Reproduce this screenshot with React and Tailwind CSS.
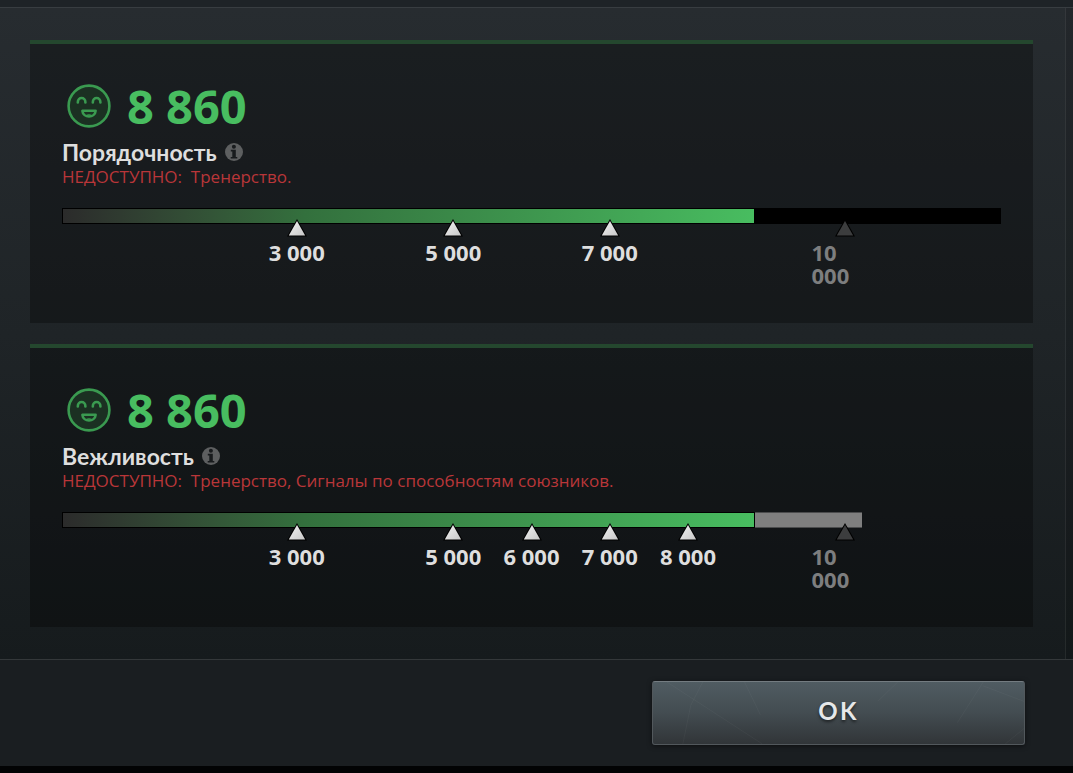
const SCALE_MAX = 12000;

const SCORES = [
  {
    id: "behavior",
    title: "Порядочность",
    value: 8860,
    locked: "Тренерство.",
    ticks: [3000, 5000, 7000, 10000],
    limit: null,
  },
  {
    id: "communication",
    title: "Вежливость",
    value: 8860,
    locked: "Тренерство, Сигналы по способностям союзников.",
    ticks: [3000, 5000, 6000, 7000, 8000, 10000],
    limit: 10220,
  },
];

const percent = (n) => `${(n / SCALE_MAX) * 100}%`;

const formatNumber = (n) => String(n).replace(/\B(?=(\d{3})+$)/g, " ");

const SmileIcon = () => (
  <svg
    viewBox="0 0 44 44"
    className="size-11 shrink-0"
    fill="none"
    stroke="#3a9a50"
    strokeWidth="2.6"
    strokeLinecap="round"
    strokeLinejoin="round"
    aria-hidden="true"
  >
    <circle cx="22" cy="22" r="20.4" fill="#1b3022" />
    <path d="M10.8 18.4c0-5.8 7.6-5.8 7.6 0" />
    <path d="M25.8 18.4c0-5.8 7.6-5.8 7.6 0" />
    <path d="M15.4 26.8h13.2c-.6 7.6-12.6 7.6-13.2 0z" />
    <path d="M19 31.8c1.8-1 4.2-1 6 0" strokeWidth="1.2" />
  </svg>
);

const InfoIcon = () => (
  <svg viewBox="0 0 18 18" className="size-[18px] block" aria-hidden="true">
    <circle cx="9" cy="9" r="9" fill="#5d5f60" />
    <circle cx="8.9" cy="3.7" r="2" fill="#181b1d" />
    <path d="M5.8 6.8h5v7.1h1.5v1.6H5.7v-1.6h1.6V8.4H5.8z" fill="#181b1d" />
  </svg>
);

const Tick = ({ value, reached }) => (
  <li
    className={`absolute top-[11px] flex w-max max-w-[66px] -translate-x-1/2 flex-col items-center text-[22px] leading-[23px] font-bold ${reached ? "text-[#dedede]" : "text-[#7d7e7f]"}`}
    style={{ left: percent(value) }}
  >
    <svg viewBox="0 0 20 18" className="mb-1 h-[18px] w-5" aria-hidden="true">
      <path d="M10 0L20 17.5H0z" fill="#000" />
      <path
        d="M10 2L18.2 16.4H1.8z"
        fill={reached ? "url(#tick-on)" : "#3c3d3e"}
      />
    </svg>
    <span>{formatNumber(value)}</span>
  </li>
);

const ScoreCard = ({ score }) => (
  <section className="border-t-4 border-[#24472e] bg-black/30 px-8 pt-10 pb-9">
    <div className="flex items-center gap-4 pl-[5px]">
      <SmileIcon />
      <span className="text-[47px] leading-[44px] font-bold text-[#48bd60]">
        {formatNumber(score.value)}
      </span>
    </div>

    <div className="mt-2.5 flex items-center gap-2">
      <h2 className="font-['Lato','Open_Sans',sans-serif] text-[23px] leading-7 font-bold text-[#dedede]">
        {score.title}
      </h2>
      <button type="button" aria-label={`Подробнее: ${score.title}`}>
        <InfoIcon />
      </button>
    </div>

    <p className="text-[17px] leading-[22px] font-medium whitespace-pre-wrap text-[#b93639]">
      {"НЕДОСТУПНО:  "}
      {score.locked}
    </p>

    <div className="relative mt-5 h-[79px]">
      <div className={score.limit ? "relative h-4" : "relative h-4 bg-black"}>
        {score.limit && (
          <div
            className="absolute inset-y-0 left-0 border-y border-[#4b4c4d] bg-[#7f7f7f]"
            style={{ width: percent(score.limit) }}
          />
        )}
        <div
          className="absolute inset-y-0 left-0 border border-black bg-linear-to-r from-[#2b2b2b] via-[#33703d] via-35% to-[#48bd60]"
          style={{ width: percent(score.value) }}
        />
      </div>
      <ul>
        {score.ticks.map((t) => (
          <Tick key={t} value={t} reached={t <= score.value} />
        ))}
      </ul>
    </div>
  </section>
);

const App = () => {
  return (
    <div className="flex min-h-screen flex-col bg-[#020304] pb-[7px] font-['Open_Sans','Noto_Sans',sans-serif]">
      <svg className="absolute size-0" aria-hidden="true">
        <defs>
          <linearGradient id="tick-on" x1="0" y1="0" x2="1" y2="1">
            <stop offset="0" stopColor="#f2f2f2" />
            <stop offset="1" stopColor="#c8c8c8" />
          </linearGradient>
        </defs>
      </svg>

      <div className="h-2 border-b border-[#383d41] bg-[#1e2327]" />

      <main className="flex flex-1 bg-linear-to-b from-[#272c30] via-[#1f2427] to-[#161b1d]">
        <div className="flex flex-1 flex-col gap-[21px] pt-8 pr-8 pb-8 pl-[30px]">
          {SCORES.map((score) => (
            <ScoreCard key={score.id} score={score} />
          ))}
        </div>
        <div className="w-2 border-l border-white/8 bg-black/10" />
      </main>

      <footer className="flex justify-end border-t border-[#34383a] bg-[#1a1e21] px-12 py-[21px]">
        <button
          type="button"
          className="relative h-16 w-[373px] overflow-hidden rounded-[3px] border border-[#52585c] border-t-[#747c81] bg-linear-to-b from-[#505c62] via-[#434c51] to-[#313538] pb-1 font-['Lato','Open_Sans',sans-serif] text-2xl font-bold tracking-widest text-[#e6e8e9] shadow-[0_1px_5px_#0008]"
        >
          <svg
            viewBox="0 0 373 64"
            preserveAspectRatio="none"
            className="absolute inset-0 size-full"
            fill="none"
            stroke="#ffffff"
            strokeOpacity="0.04"
            aria-hidden="true"
          >
            <path d="M14 0L110 64M50 0L38 24 30 64M92 0L108 34M246 0L226 20M332 0L306 42M332 4L373 20M354 64L373 48" />
          </svg>
          <span className="relative [text-shadow:0_2px_3px_#0008]">OK</span>
        </button>
      </footer>
    </div>
  );
};

export default App;
